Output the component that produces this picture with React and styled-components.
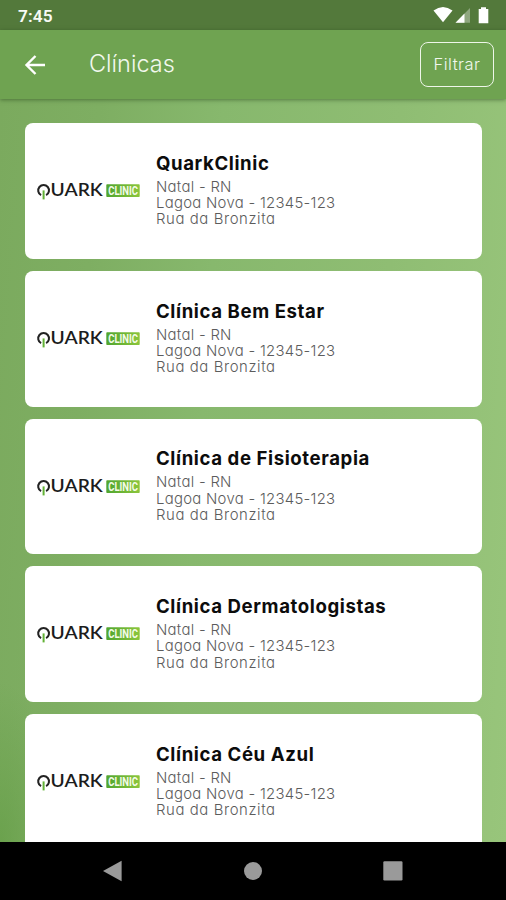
import React from 'react';
import styled, { createGlobalStyle } from 'styled-components';

const GlobalStyle = createGlobalStyle`
  * {
    box-sizing: border-box;
  }

  body {
    margin: 0;
    background: #000;
    font-family: Inter, 'Open Sans', sans-serif;
  }
`;

const Screen = styled.div`
  width: 506px;
  height: 900px;
  display: flex;
  flex-direction: column;
  overflow: hidden;
  background: #000;
`;

const StatusBar = styled.div`
  flex: none;
  height: 30px;
  padding: 0 15px 0 18px;
  display: flex;
  align-items: center;
  justify-content: space-between;
  background: #53793b;
`;

const Clock = styled.span`
  font-family: Roboto, sans-serif;
  font-size: 17.3px;
  font-weight: 600;
  line-height: 30px;
  padding-top: 1px;
  letter-spacing: 0.1px;
  color: #f7faf5;
`;

const StatusIcons = styled.svg`
  width: 58px;
  height: 30px;
`;

const AppBar = styled.header`
  flex: none;
  height: 69px;
  padding: 0 12px 0 24px;
  display: flex;
  align-items: center;
  background: #6fa351;
  box-shadow: 0 1px 4px rgba(30, 60, 20, 0.5);
  z-index: 1;
`;

const BackIcon = styled.svg`
  width: 22px;
  height: 22px;
`;

const Title = styled.h1`
  flex: 1;
  margin: 0 0 2px 43px;
  font-size: 23.5px;
  font-weight: 300;
  color: #f2f8ee;
`;

const FilterButton = styled.button`
  width: 74px;
  height: 45px;
  padding: 0 0 1px;
  border: 1.5px solid #eef6e9;
  border-radius: 8px;
  background: transparent;
  font-family: inherit;
  font-size: 16.5px;
  font-weight: 300;
  letter-spacing: 0.5px;
  color: #f2f8ee;
`;

const List = styled.main`
  flex: none;
  height: 743px;
  padding: 24.4px 24px 0 25px;
  display: flex;
  flex-direction: column;
  gap: 12.2px;
  overflow: hidden;
  background:
    radial-gradient(ellipse 60px 160px at 0 100%, rgba(95, 155, 65, 0.6), transparent),
    linear-gradient(94deg, #7baa5e 0%, #7eae62 18%, #87b86d 40%, #8fbd73 72%, #98c57b 100%);
`;

const Card = styled.article`
  flex: none;
  height: 135.5px;
  padding: 0 12px;
  display: flex;
  align-items: center;
  gap: 15px;
  background: #fff;
  border-radius: 8px;
`;

const Logo = styled.svg`
  flex: none;
  width: 104px;
  height: 24px;
  overflow: visible;
`;

const Info = styled.div`
  padding-bottom: 3.6px;
`;

const Name = styled.h2`
  margin: 0 0 4px;
  font-size: 18.6px;
  font-weight: 650;
  line-height: 24px;
  letter-spacing: 0.6px;
  color: #0c0c0c;
  white-space: nowrap;
`;

const Line = styled.p`
  margin: 0;
  font-size: 14.9px;
  font-weight: 300;
  line-height: 16.2px;
  letter-spacing: ${({ $tight }) => ($tight ? '0.28px' : '0.6px')};
  font-feature-settings: 'cv11';
  color: #5c5c5c;
  white-space: nowrap;
`;

const NavBar = styled.nav`
  flex: 1;
  padding: 0 102px 0 102px;
  display: flex;
  align-items: center;
  justify-content: space-between;
  background: #000;
`;

const NavIcon = styled.svg`
  width: 22px;
  height: 22px;
  fill: #9a9a9a;
`;

const address = {
  city: 'Natal - RN',
  district: 'Lagoa Nova - 12345-123',
  street: 'Rua da Bronzita',
};

const clinics = [
  { id: 1, name: 'QuarkClinic', address },
  { id: 2, name: 'Clínica Bem Estar', address },
  { id: 3, name: 'Clínica de Fisioterapia', address },
  { id: 4, name: 'Clínica Dermatologistas', address },
  { id: 5, name: 'Clínica Céu Azul', address },
];

const QuarkLogo = () => (
  <Logo viewBox="0 0 104 24">
    <defs>
      <linearGradient id="badge" x1="0" x2="1">
        <stop offset="0" stopColor="#4fa52f" />
        <stop offset="1" stopColor="#8cc63c" />
      </linearGradient>
    </defs>
    <path d="M4.1 16.2A5.4 5.4 0 1 1 9.1 16.2" fill="none" stroke="#222" strokeWidth="2" />
    <path d="M6.6 11.4V20.4" stroke="#62b236" strokeWidth="2" />
    <text x="13.6" y="17.2" fontFamily="Lato, sans-serif" fontSize="16.4" fontWeight="600" fill="#1c1c1c" textLength="52.2" lengthAdjust="spacingAndGlyphs">UARK</text>
    <rect x="69.3" y="5.2" width="33.4" height="12.8" rx="0.8" fill="url(#badge)" />
    <text x="71.2" y="16" fontFamily="Roboto, sans-serif" fontSize="12.6" fontWeight="700" fill="#f4fbe9" textLength="29.8" lengthAdjust="spacingAndGlyphs">CLINIC</text>
  </Logo>
);

const ClinicCard = ({ clinic }) => (
  <Card>
    <QuarkLogo />
    <Info>
      <Name>{clinic.name}</Name>
      <Line $tight>{clinic.address.city}</Line>
      <Line $tight>{clinic.address.district}</Line>
      <Line>{clinic.address.street}</Line>
    </Info>
  </Card>
);

const App = () => {
  return (
    <>
      <GlobalStyle />
      <Screen>
        <StatusBar>
          <Clock>7:45</Clock>
          <StatusIcons viewBox="0 0 58 30">
            <path d="M0.5 10.5Q10 3.5 19.5 10.5L10 22.2Z" fill="#fff" />
            <path d="M37 8V22.8H22.5Z" fill="#fff" fillOpacity="0.35" />
            <path d="M31.5 13.6V22.8H22.5Z" fill="#fff" />
            <path d="M48 7.3H53V9H55.3V23.3H45.7V9H48Z" fill="#fff" />
          </StatusIcons>
        </StatusBar>
        <AppBar>
          <BackIcon viewBox="0 0 22 22">
            <path d="M11.5 2L2.5 11L11.5 20M2.5 11H21" fill="none" stroke="#fff" strokeWidth="2.4" />
          </BackIcon>
          <Title>Clínicas</Title>
          <FilterButton>Filtrar</FilterButton>
        </AppBar>
        <List>
          {clinics.map((clinic) => (
            <ClinicCard key={clinic.id} clinic={clinic} />
          ))}
        </List>
        <NavBar>
          <NavIcon viewBox="0 0 22 22">
            <path d="M1 11L19.6 0.8V21.2Z" />
          </NavIcon>
          <NavIcon viewBox="0 0 22 22">
            <circle cx="11" cy="11" r="9" />
          </NavIcon>
          <NavIcon viewBox="0 0 22 22">
            <rect x="1.3" y="1.3" width="19.2" height="19.2" rx="1.2" />
          </NavIcon>
        </NavBar>
      </Screen>
    </>
  );
};

export default App;
